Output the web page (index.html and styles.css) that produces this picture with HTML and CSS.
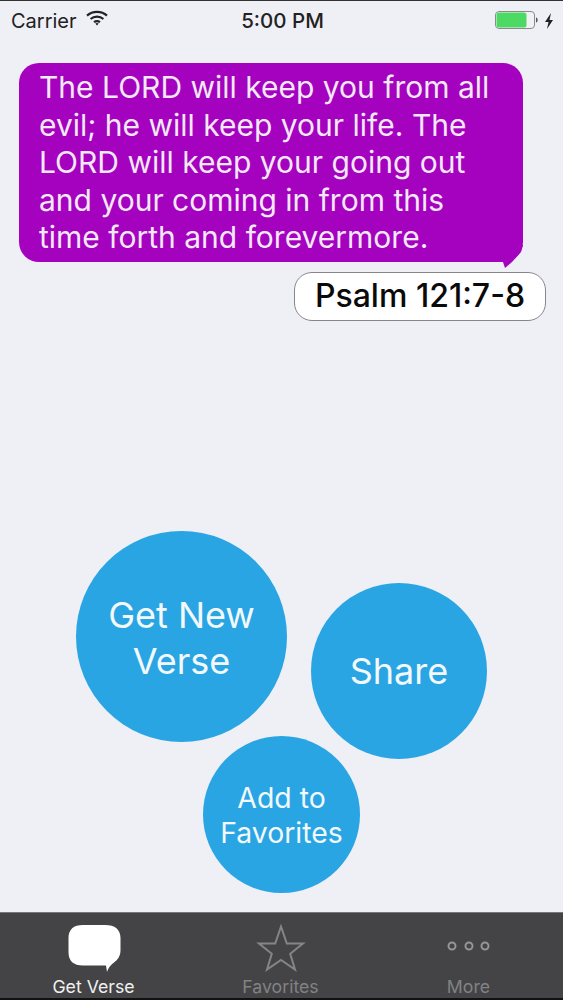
FILE: index.html
```html
<!DOCTYPE html>
<html lang="en">
<head>
<meta charset="utf-8">
<title>Get Verse</title>
<link rel="stylesheet" href="styles.css">
</head>
<body>
<div class="app">
  <header class="status">
    <div class="status-left">
      <span class="carrier">Carrier</span>
      <svg class="wifi" width="22" height="16" viewBox="0 0 22 16"><path d="M1 5.600C6.600.6 15.400.6 21 5.600" class="arc"/><path d="M4.600 9C8.200 5.900 13.800 5.900 17.400 9" class="arc"/><path d="M8 12.200c1.800-1.300 4.200-1.300 6 0" class="arc"/><path d="M9.300 13.400L11 15.400l1.700-2c-1-.7-2.400-.7-3.400 0z" fill="#222"/></svg>
    </div>
    <span class="clock">5:00 PM</span>
    <div class="status-right">
      <svg class="battery" width="43" height="18" viewBox="0 0 43 18"><rect x="0.500" y="0.500" width="39" height="17" rx="3.500" fill="#f2f2f4" stroke="#8a8a8c"/><rect x="1.500" y="1.500" width="30" height="15" rx="2.500" fill="#4cd964"/><path d="M41 6.500v5c1.200 0 1.600-1 1.600-2.500S42.200 6.500 41 6.500z" fill="#555"/></svg>
      <svg width="10" height="18" viewBox="0 0 10 18"><path d="M7 1L1 10h3.500L3 17l6-9H5.500z" fill="#222"/></svg>
    </div>
  </header>

  <main class="main">
    <section class="verse">
      <p class="bubble">The LORD will keep you from all evil; he will keep your life. The LORD will keep your going out and your coming in from this time forth and forevermore.</p>
      <span class="bubble-tail"></span>
      <div class="ref-row"><span class="ref">Psalm 121:7-8</span></div>
    </section>

    <section class="circles">
      <div class="circles-row">
        <button class="circle circle-new">Get New<br>Verse</button>
        <button class="circle circle-share">Share</button>
      </div>
      <button class="circle circle-add">Add to<br>Favorites</button>
    </section>
  </main>

  <nav class="tabs">
    <div class="tab tab-active">
      <svg class="tab-icon" width="54" height="50" viewBox="0 0 54 50"><path d="M16 2h22c10 0 15.500 4.500 15.500 13v12c0 6-2.500 9.500-6.500 12.500-2.500 2-5 4-7 9.500l-1-6.500H16C6.500 42.500 1.500 38 1.500 29V15C1.500 6.500 6.500 2 16 2z" fill="#fff"/></svg>
      <span>Get Verse</span>
    </div>
    <div class="tab">
      <svg class="tab-icon" width="50" height="50" viewBox="0 0 50 50"><path d="M25 3.500l5.800 17H47L34.200 30.800 39 46.500 25 37 11 46.500l4.800-15.700L3 20.500h16.200z" fill="none" stroke="#858587" stroke-width="2"/></svg>
      <span>Favorites</span>
    </div>
    <div class="tab">
      <svg class="tab-icon" width="44" height="50" viewBox="0 0 44 50"><g fill="none" stroke="#959597" stroke-width="2"><circle cx="5" cy="23" r="3.500"/><circle cx="22" cy="23" r="3.500"/><circle cx="38" cy="23" r="3.500"/></g></svg>
      <span>More</span>
    </div>
  </nav>
</div>
</body>
</html>
```

FILE: styles.css
```css
* { box-sizing: border-box; }
html, body { margin: 0; padding: 0; }
body { font-family: Inter, "Liberation Sans", sans-serif; background: #efeff6; }
.app { width: 563px; height: 1000px; display: flex; flex-direction: column; overflow: hidden; background: #efeff6; border-top: 1px solid #333; border-bottom: 2px solid #111; }

.status { height: 39px; flex: none; padding: 0 9px 0 11px; display: grid; grid-template-columns: 1fr auto 1fr; align-items: center; color: #222; }
.status-left { display: flex; align-items: center; gap: 9px; }
.carrier { font-size: 20px; }
.wifi { margin-top: -5px; }
.arc { fill: none; stroke: #222; stroke-width: 2.200; }
.clock { font-size: 20.500px; font-weight: 500; }
.status-right { display: flex; justify-content: flex-end; align-items: center; gap: 6px; }
.battery { margin-top: -2px; }

.main { flex: 1; display: flex; flex-direction: column; justify-content: space-between; min-height: 0; padding-bottom: 19px; }
.verse { padding: 23px 17px 0 19px; position: relative; }
.bubble { margin: 0; width: 504px; height: 199px; padding: 6px 20px 0 20px; background: #a402bf; color: #f3e8f6; border-radius: 20px; font-size: 30px; line-height: 37.500px; }
.bubble-tail { position: absolute; left: 503px; top: 205px; width: 20px; height: 24px; background: #a402bf; clip-path: polygon(0 0, 20px 0, 18px 7px, 9px 17px, 2px 23px, 0 17px); }
.ref-row { display: flex; justify-content: flex-end; margin-top: 10px; }
.ref { width: 252px; height: 49px; background: #fff; color: #0a0a0a; border: 1px solid #86868a; border-radius: 18px; font-size: 32px; font-weight: 500; line-height: 44px; padding-bottom: 2px; display: flex; align-items: center; justify-content: center; }

.circles { padding-left: 76px; }
.circles-row { display: flex; align-items: flex-start; gap: 24px; }
.circle { border: 0; padding: 0 0 0 0; background: #29a5e3; color: #f2f8fc; font-family: inherit; border-radius: 50%; display: block; text-align: center; flex: none; }
.circle-new { width: 211px; height: 211px; font-size: 36px; line-height: 46px; padding-top: 3px; }
.circle-share { width: 176px; height: 176px; margin-top: 52px; font-size: 36px; }
.circle-add { width: 157px; height: 157px; margin: -23px 0 0 127px; font-size: 28.400px; line-height: 35px; }

.tabs { height: 86px; flex: none; background: #444446; display: grid; grid-template-columns: 187px 187px 189px; border-top: 1px solid #77777a; }
.tab { display: flex; flex-direction: column; align-items: center; color: #828284; font-size: 17.700px; padding-top: 10px; }
.tab-active { color: #f0f0f0; }
.tab-icon { display: block; margin-bottom: 3px; }
```
